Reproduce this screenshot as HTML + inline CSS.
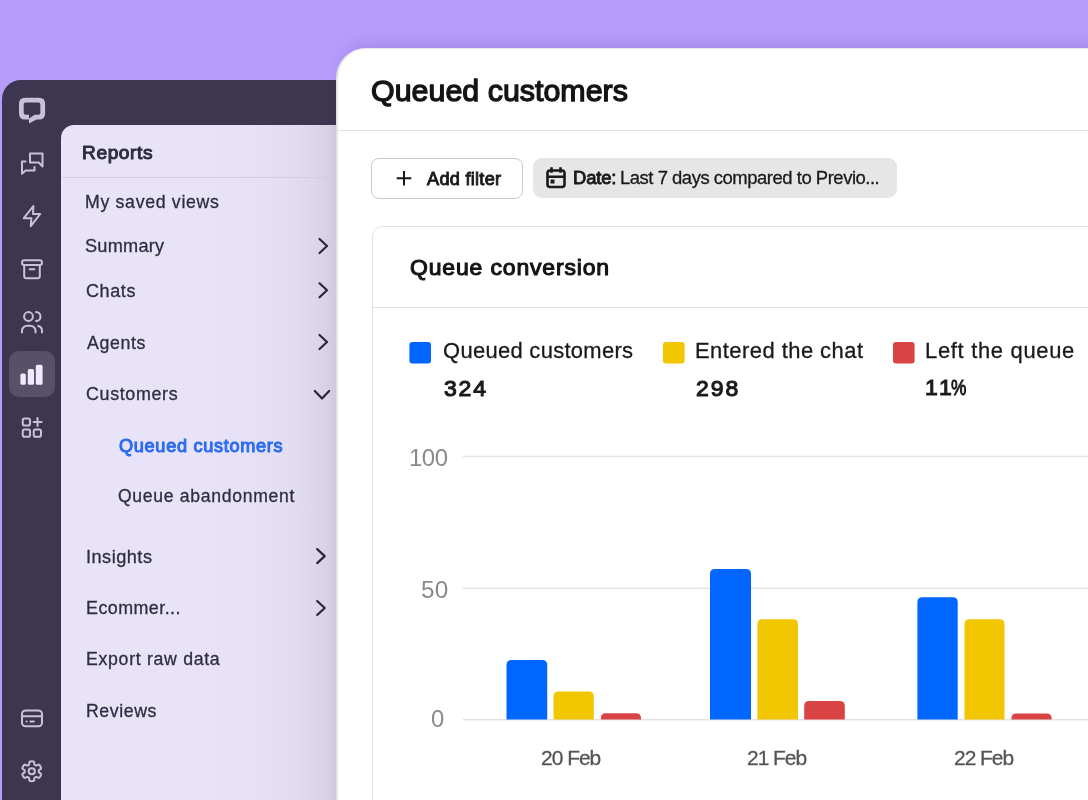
<!DOCTYPE html>
<html><head><meta charset="utf-8">
<style>
html,body{margin:0;padding:0;}
body{width:1088px;height:800px;overflow:hidden;position:relative;background:#B89CFC;font-family:"Liberation Sans",sans-serif;}
.abs{position:absolute;}
.t{position:absolute;line-height:0;white-space:nowrap;will-change:transform;}
#dark{position:absolute;left:2px;top:80px;width:500px;height:760px;background:#3D3650;border-top-left-radius:19px;}
#panel{position:absolute;left:61px;top:125px;width:275px;height:700px;border-top-left-radius:13px;
  background:linear-gradient(90deg,#E8E3F8 0px,#E8E3F8 140px,#E5E0F5 205px,#E1DCF1 235px,#DBD5EB 258px,#D4CEE3 275px);}
#psep{position:absolute;left:61px;top:176.5px;width:275px;height:1px;background:#D3CEE2;}
#main{position:absolute;left:336px;top:48px;width:800px;height:800px;background:#fff;border-top-left-radius:30px;
  border-top:1px solid #ECE8EE;border-left:2px solid #E4E4E6;box-sizing:border-box;box-shadow:0 -10px 18px -10px rgba(60,30,130,0.22);}
#hsep{position:absolute;left:337px;top:129.5px;width:800px;height:1.3px;background:#E3E3E3;}
#btn{position:absolute;left:371.3px;top:158px;width:149.3px;height:38.5px;border:1px solid #C9C9C9;border-radius:8px;background:#fff;}
#chip{position:absolute;left:533px;top:158px;width:364px;height:40px;border-radius:9px;background:#E6E6E6;}
#card{position:absolute;left:371.5px;top:225.5px;width:800px;height:800px;border:1.3px solid #E2E2E2;border-radius:10px;background:#fff;}
#csep{position:absolute;left:372px;top:307px;width:800px;height:1.3px;background:#E2E2E2;}
</style></head><body>
<div id="dark"></div>
<svg class="abs" width="60" height="800" viewBox="0 0 60 800" style="left:0;top:0"><path fill="#C8C1D8" fill-rule="evenodd" d="M25,97.85 H39.1 Q45.1,97.85 45.1,103.85 V113.5 Q45.1,119.5 39.1,119.5 H36.5 L29,123.5 V119.5 H25 Q19,119.5 19,113.5 V103.85 Q19,97.85 25,97.85 Z M25.7,102.6 H38.35 Q40.35,102.6 40.35,104.6 V112.75 Q40.35,114.75 38.35,114.75 H34.6 L29,118.6 V114.75 H25.7 Q23.7,114.75 23.7,112.75 V104.6 Q23.7,102.6 25.7,102.6 Z"/><path fill="none" stroke="#C8C1D8" stroke-width="2" stroke-linecap="round" stroke-linejoin="round" d="M30,162.5 V153.5 H42.5 V166.5 L38.8,162.5 Z"/><path fill="none" stroke="#C8C1D8" stroke-width="2" stroke-linecap="round" stroke-linejoin="round" d="M25.6,161.5 H22 V173.8 L25.6,170.6 H34.5 V167"/><path fill="none" stroke="#C8C1D8" stroke-width="2" stroke-linecap="round" stroke-linejoin="round" d="M33.4,206 L23.8,218.2 H31.4 L30.8,226.2 L40.2,214 H33 Z"/><rect x="22" y="260.2" width="20" height="4.8" rx="2.2" fill="none" stroke="#C8C1D8" stroke-width="2" stroke-linecap="round" stroke-linejoin="round"/><path fill="none" stroke="#C8C1D8" stroke-width="2" stroke-linecap="round" stroke-linejoin="round" d="M24.2,265 V276 Q24.2,278.2 26.4,278.2 H37.6 Q39.8,278.2 39.8,276 V265"/><path fill="none" stroke="#C8C1D8" stroke-width="2" stroke-linecap="round" stroke-linejoin="round" d="M29.6,269.2 H34.4"/><circle cx="28.5" cy="316.5" r="4.4" fill="none" stroke="#C8C1D8" stroke-width="2" stroke-linecap="round" stroke-linejoin="round"/><path fill="none" stroke="#C8C1D8" stroke-width="2" stroke-linecap="round" stroke-linejoin="round" d="M36,312 A4.5,4.5 0 0 1 36,321"/><path fill="none" stroke="#C8C1D8" stroke-width="2" stroke-linecap="round" stroke-linejoin="round" d="M22,332.5 V331 A5.2,5.2 0 0 1 27.2,325.8 H30.3 A5.2,5.2 0 0 1 35.5,331 V332.5"/><path fill="none" stroke="#C8C1D8" stroke-width="2" stroke-linecap="round" stroke-linejoin="round" d="M38.2,326 A5,5 0 0 1 42,331 V332.5"/><rect x="9" y="351" width="46" height="46" rx="10" fill="#575068"/><rect x="20.4" y="373.4" width="5.4" height="11.4" rx="1.6" fill="#EFEAFB"/><rect x="27.8" y="369" width="6.2" height="15.8" rx="1.6" fill="#EFEAFB"/><rect x="35.8" y="364.8" width="6.8" height="20" rx="1.6" fill="#EFEAFB"/><rect x="22.75" y="418.5" width="7.25" height="7" rx="1.8" fill="none" stroke="#C8C1D8" stroke-width="2" stroke-linecap="round" stroke-linejoin="round"/><rect x="22.75" y="429.5" width="7.25" height="7.25" rx="1.8" fill="none" stroke="#C8C1D8" stroke-width="2" stroke-linecap="round" stroke-linejoin="round"/><rect x="33.75" y="429.5" width="7.25" height="7.25" rx="1.8" fill="none" stroke="#C8C1D8" stroke-width="2" stroke-linecap="round" stroke-linejoin="round"/><path fill="none" stroke="#C8C1D8" stroke-width="2" stroke-linecap="round" stroke-linejoin="round" d="M33.6,422 H41.6 M37.5,418 V426"/><rect x="22" y="710.5" width="20" height="15.8" rx="3.5" fill="none" stroke="#C8C1D8" stroke-width="2" stroke-linecap="round" stroke-linejoin="round"/><path fill="none" stroke="#C8C1D8" stroke-width="2" stroke-linecap="round" stroke-linejoin="round" d="M22,716.2 H42"/><path fill="none" stroke="#C8C1D8" stroke-width="2" stroke-linecap="round" stroke-linejoin="round" stroke-width="1.6" d="M26.5,721.6 H26.6 M30.4,721.6 H33.8"/><polygon fill="none" stroke="#C8C1D8" stroke-width="2" stroke-linecap="round" stroke-linejoin="round" points="31.75,761.35 32.01,761.35 32.27,761.36 32.53,761.38 32.78,761.41 33.04,761.44 33.30,761.49 33.55,761.56 33.79,761.66 34.01,761.85 34.17,762.20 34.26,762.78 34.28,763.47 34.30,764.05 34.37,764.43 34.48,764.65 34.62,764.79 34.78,764.91 34.93,765.00 35.09,765.10 35.25,765.19 35.41,765.28 35.57,765.37 35.73,765.46 35.90,765.53 36.10,765.58 36.35,765.57 36.71,765.44 37.22,765.17 37.83,764.84 38.37,764.63 38.76,764.60 39.03,764.69 39.25,764.85 39.43,765.03 39.60,765.23 39.76,765.43 39.91,765.64 40.05,765.86 40.19,766.08 40.32,766.30 40.45,766.53 40.57,766.76 40.68,766.99 40.79,767.22 40.89,767.46 40.98,767.71 41.04,767.96 41.07,768.22 41.02,768.50 40.80,768.83 40.34,769.19 39.75,769.55 39.26,769.86 38.97,770.11 38.83,770.32 38.78,770.51 38.76,770.70 38.75,770.88 38.75,771.07 38.75,771.25 38.75,771.43 38.75,771.62 38.76,771.80 38.78,771.99 38.83,772.18 38.97,772.39 39.26,772.64 39.75,772.95 40.34,773.31 40.80,773.67 41.02,774.00 41.07,774.28 41.04,774.54 40.98,774.79 40.89,775.04 40.79,775.28 40.68,775.51 40.57,775.74 40.45,775.97 40.32,776.20 40.19,776.42 40.05,776.64 39.91,776.86 39.76,777.07 39.60,777.27 39.43,777.47 39.25,777.65 39.03,777.81 38.76,777.90 38.37,777.87 37.83,777.66 37.22,777.33 36.71,777.06 36.35,776.93 36.10,776.92 35.90,776.97 35.73,777.04 35.57,777.13 35.41,777.22 35.25,777.31 35.09,777.40 34.93,777.50 34.78,777.59 34.62,777.71 34.48,777.85 34.37,778.07 34.30,778.45 34.28,779.03 34.26,779.72 34.17,780.30 34.01,780.65 33.79,780.84 33.55,780.94 33.30,781.01 33.04,781.06 32.78,781.09 32.53,781.12 32.27,781.14 32.01,781.15 31.75,781.15 31.49,781.15 31.23,781.14 30.97,781.12 30.72,781.09 30.46,781.06 30.20,781.01 29.95,780.94 29.71,780.84 29.49,780.65 29.33,780.30 29.24,779.72 29.22,779.03 29.20,778.45 29.13,778.07 29.02,777.85 28.88,777.71 28.72,777.59 28.57,777.50 28.41,777.40 28.25,777.31 28.09,777.22 27.93,777.13 27.77,777.04 27.60,776.97 27.40,776.92 27.15,776.93 26.79,777.06 26.28,777.33 25.67,777.66 25.13,777.87 24.74,777.90 24.47,777.81 24.25,777.65 24.07,777.47 23.90,777.27 23.74,777.07 23.59,776.86 23.45,776.64 23.31,776.42 23.18,776.20 23.05,775.97 22.93,775.74 22.82,775.51 22.71,775.28 22.61,775.04 22.52,774.79 22.46,774.54 22.43,774.28 22.48,774.00 22.70,773.67 23.16,773.31 23.75,772.95 24.24,772.64 24.53,772.39 24.67,772.18 24.72,771.99 24.74,771.80 24.75,771.62 24.75,771.43 24.75,771.25 24.75,771.07 24.75,770.88 24.74,770.70 24.72,770.51 24.67,770.32 24.53,770.11 24.24,769.86 23.75,769.55 23.16,769.19 22.70,768.83 22.48,768.50 22.43,768.22 22.46,767.96 22.52,767.71 22.61,767.46 22.71,767.22 22.82,766.99 22.93,766.76 23.05,766.53 23.18,766.30 23.31,766.08 23.45,765.86 23.59,765.64 23.74,765.43 23.90,765.23 24.07,765.03 24.25,764.85 24.47,764.69 24.74,764.60 25.13,764.63 25.67,764.84 26.28,765.17 26.79,765.44 27.15,765.57 27.40,765.58 27.60,765.53 27.77,765.46 27.93,765.37 28.09,765.28 28.25,765.19 28.41,765.10 28.57,765.00 28.72,764.91 28.88,764.79 29.02,764.65 29.13,764.43 29.20,764.05 29.22,763.47 29.24,762.78 29.33,762.20 29.49,761.85 29.71,761.66 29.95,761.56 30.20,761.49 30.46,761.44 30.72,761.41 30.97,761.38 31.23,761.36 31.49,761.35"/><circle cx="31.75" cy="771.25" r="3.1" fill="none" stroke="#C8C1D8" stroke-width="2" stroke-linecap="round" stroke-linejoin="round"/></svg>
<div id="panel"></div>
<div id="psep"></div>
<div class="t" id="reports" style="left:82.00px;top:152.86px;font-size:19.11px;font-weight:400;color:#312D40;letter-spacing:0.600px;-webkit-text-stroke:1.05px #312D40;">Reports</div><div class="t" id="saved" style="left:85.20px;top:202.44px;font-size:17.73px;font-weight:400;color:#312D40;letter-spacing:0.677px;-webkit-text-stroke:0.3px #312D40;">My saved views</div><div class="t" id="summary" style="left:85.20px;top:246.08px;font-size:18.17px;font-weight:400;color:#312D40;letter-spacing:0.233px;-webkit-text-stroke:0.3px #312D40;">Summary</div><div class="t" id="chats" style="left:85.80px;top:290.83px;font-size:18.02px;font-weight:400;color:#312D40;letter-spacing:0.600px;-webkit-text-stroke:0.3px #312D40;">Chats</div><div class="t" id="agents" style="left:86.80px;top:343.04px;font-size:17.73px;font-weight:400;color:#312D40;letter-spacing:0.640px;-webkit-text-stroke:0.3px #312D40;">Agents</div><div class="t" id="customers" style="left:85.80px;top:394.49px;font-size:17.88px;font-weight:400;color:#312D40;letter-spacing:0.662px;-webkit-text-stroke:0.3px #312D40;">Customers</div><div class="t" id="qcblue" style="left:119.40px;top:445.98px;font-size:18.17px;font-weight:400;color:#2C6CF0;letter-spacing:0.680px;-webkit-text-stroke:1.05px #2C6CF0;">Queued customers</div><div class="t" id="qaband" style="left:118.40px;top:495.69px;font-size:17.59px;font-weight:400;color:#312D40;letter-spacing:0.700px;-webkit-text-stroke:0.3px #312D40;">Queue abandonment</div><div class="t" id="insights" style="left:85.80px;top:557.08px;font-size:18.17px;font-weight:400;color:#312D40;letter-spacing:0.486px;-webkit-text-stroke:0.3px #312D40;">Insights</div><div class="t" id="ecom" style="left:85.80px;top:608.49px;font-size:17.88px;font-weight:400;color:#312D40;letter-spacing:0.467px;-webkit-text-stroke:0.3px #312D40;">Ecommer...</div><div class="t" id="export" style="left:85.80px;top:659.44px;font-size:17.73px;font-weight:400;color:#312D40;letter-spacing:0.686px;-webkit-text-stroke:0.3px #312D40;">Export raw data</div><div class="t" id="reviews" style="left:85.80px;top:711.24px;font-size:17.73px;font-weight:400;color:#312D40;letter-spacing:0.567px;-webkit-text-stroke:0.3px #312D40;">Reviews</div>
<svg class="abs" width="1088" height="800" style="left:0;top:0"><path fill="none" stroke="#2A2638" stroke-width="2.2" stroke-linecap="round" stroke-linejoin="round" d="M319.5,239 L327.0,246 L319.5,253"/><path fill="none" stroke="#2A2638" stroke-width="2.2" stroke-linecap="round" stroke-linejoin="round" d="M319.5,283.3 L327.0,290.3 L319.5,297.3"/><path fill="none" stroke="#2A2638" stroke-width="2.2" stroke-linecap="round" stroke-linejoin="round" d="M319.5,335 L327.0,342 L319.5,349"/><path fill="none" stroke="#2A2638" stroke-width="2.2" stroke-linecap="round" stroke-linejoin="round" d="M317.2,549.1 L324.7,556.1 L317.2,563.1"/><path fill="none" stroke="#2A2638" stroke-width="2.2" stroke-linecap="round" stroke-linejoin="round" d="M317.2,601 L324.7,608 L317.2,615"/><path fill="none" stroke="#2A2638" stroke-width="2.2" stroke-linecap="round" stroke-linejoin="round" d="M314.8,391 L322,398.5 L329.2,391"/></svg>
<div id="main"></div>
<div id="hsep"></div>
<div id="btn"></div>
<div id="chip"></div>
<div id="card"></div>
<div id="csep"></div>
<svg class="abs" width="1088" height="800" style="left:0;top:0"><rect x="463" y="455.75" width="700" height="1.5" fill="#E2E2E2"/><rect x="463" y="587.55" width="700" height="1.5" fill="#E2E2E2"/><rect x="463" y="718.95" width="700" height="1.5" fill="#E2E2E2"/><path fill="#0066FF" d="M506.5,719.5 V665 Q506.5,660 511.5,660 H542.2 Q547.2,660 547.2,665 V719.5 Z"/><path fill="#F2C600" d="M553.5,719.5 V696.6 Q553.5,691.6 558.5,691.6 H588.8 Q593.8,691.6 593.8,696.6 V719.5 Z"/><path fill="#DA4343" d="M600.9,719.5 V718.2 Q600.9,713.2 605.9,713.2 H636 Q641,713.2 641,718.2 V719.5 Z"/><path fill="#0066FF" d="M710,719.5 V574 Q710,569 715,569 H746 Q751,569 751,574 V719.5 Z"/><path fill="#F2C600" d="M757.4,719.5 V624.3 Q757.4,619.3 762.4,619.3 H793 Q798,619.3 798,624.3 V719.5 Z"/><path fill="#DA4343" d="M804.2,719.5 V706 Q804.2,701 809.2,701 H839.8 Q844.8,701 844.8,706 V719.5 Z"/><path fill="#0066FF" d="M917.4,719.5 V602.3 Q917.4,597.3 922.4,597.3 H952.7 Q957.7,597.3 957.7,602.3 V719.5 Z"/><path fill="#F2C600" d="M964.5,719.5 V624.2 Q964.5,619.2 969.5,619.2 H999.5 Q1004.5,619.2 1004.5,624.2 V719.5 Z"/><path fill="#DA4343" d="M1011.4,719.5 V718.4 Q1011.4,713.4 1016.4,713.4 H1046.6 Q1051.6,713.4 1051.6,718.4 V719.5 Z"/><rect x="409.4" y="341.9" width="21.6" height="21.7" rx="3" fill="#0066FF"/><rect x="663" y="341.9" width="21.6" height="21.7" rx="3" fill="#F2C600"/><rect x="893" y="341.9" width="21.6" height="21.7" rx="3" fill="#DA4343"/><path d="M404,171 V185.6 M396.7,178.3 H411.3" stroke="#1A1A1A" stroke-width="2" fill="none"/><rect x="547.5" y="170.5" width="17" height="16.5" rx="2.5" fill="none" stroke="#1A1A1A" stroke-width="2.6"/><path d="M547.5,176.8 H564.5 M551.5,167.3 V172.8 M560.5,167.3 V172.8" stroke="#1A1A1A" stroke-width="2.6" fill="none"/><rect x="550.5" y="179.5" width="4" height="4" fill="#1A1A1A"/></svg>
<div class="t" id="title" style="left:371.40px;top:89.65px;font-size:30.38px;font-weight:400;color:#141414;letter-spacing:0.020px;-webkit-text-stroke:1.3px #141414;">Queued customers</div><div class="t" id="addf" style="left:427.20px;top:179.14px;font-size:18.17px;font-weight:400;color:#1A1A1A;letter-spacing:0.267px;-webkit-text-stroke:0.9px #1A1A1A;">Add filter</div><div class="t" id="date" style="left:573.40px;top:177.94px;font-size:18.46px;font-weight:400;color:#1A1A1A;letter-spacing:-0.175px;-webkit-text-stroke:0.9px #1A1A1A;">Date:</div><div class="t" id="last" style="left:620.00px;top:178.18px;font-size:18.46px;font-weight:400;color:#1A1A1A;letter-spacing:-0.466px;-webkit-text-stroke:0.3px #1A1A1A;">Last 7 days compared to Previo...</div><div class="t" id="qconv" style="left:409.60px;top:267.10px;font-size:22.97px;font-weight:400;color:#141414;letter-spacing:0.847px;-webkit-text-stroke:1.1px #141414;">Queue conversion</div><div class="t" id="leg1" style="left:442.60px;top:350.88px;font-size:21.95px;font-weight:400;color:#1A1A1A;letter-spacing:0.313px;-webkit-text-stroke:0.3px #1A1A1A;">Queued customers</div><div class="t" id="leg2" style="left:695.00px;top:350.88px;font-size:21.95px;font-weight:400;color:#1A1A1A;letter-spacing:0.467px;-webkit-text-stroke:0.3px #1A1A1A;">Entered the chat</div><div class="t" id="leg3" style="left:925.00px;top:350.88px;font-size:21.95px;font-weight:400;color:#1A1A1A;letter-spacing:0.692px;-webkit-text-stroke:0.3px #1A1A1A;">Left the queue</div><div class="t" id="v1" style="left:443.60px;top:387.70px;font-size:22.97px;font-weight:400;color:#1A1A1A;letter-spacing:1.800px;-webkit-text-stroke:1.1px #1A1A1A;">324</div><div class="t" id="v2" style="left:696.00px;top:387.70px;font-size:22.97px;font-weight:400;color:#1A1A1A;letter-spacing:2.000px;-webkit-text-stroke:1.1px #1A1A1A;">298</div><div class="t" id="y100" style="left:409.00px;top:457.89px;font-size:23.98px;font-weight:400;color:#8A8A8A;letter-spacing:-0.500px;">100</div><div class="t" id="y50" style="left:420.60px;top:589.69px;font-size:24.27px;font-weight:400;color:#8A8A8A;letter-spacing:0.200px;">50</div><div class="t" id="y0" style="left:431.00px;top:719.24px;font-size:23.84px;font-weight:400;color:#8A8A8A;letter-spacing:0.000px;">0</div><div class="t" id="x20" style="left:540.60px;top:757.73px;font-size:20.93px;font-weight:400;color:#555555;letter-spacing:-0.980px;-webkit-text-stroke:0.3px #555555;">20 Feb</div><div class="t" id="x21" style="left:747.00px;top:757.73px;font-size:20.93px;font-weight:400;color:#555555;letter-spacing:-1.000px;-webkit-text-stroke:0.3px #555555;">21 Feb</div><div class="t" id="x22" style="left:954.00px;top:757.73px;font-size:20.93px;font-weight:400;color:#555555;letter-spacing:-1.000px;-webkit-text-stroke:0.3px #555555;">22 Feb</div><div class="t" style="transform-origin:0 0;transform:scaleX(1);left:925.2px;top:387.32px;font-size:22.97px;color:#1A1A1A;-webkit-text-stroke:1.1px #1A1A1A;">1</div><div class="t" style="transform-origin:0 0;transform:scaleX(1);left:939.0px;top:387.32px;font-size:22.97px;color:#1A1A1A;-webkit-text-stroke:1.1px #1A1A1A;">1</div><div class="t" style="transform-origin:0 0;transform:scaleX(0.75);left:951.0px;top:387.32px;font-size:22.97px;color:#1A1A1A;-webkit-text-stroke:1.1px #1A1A1A;">%</div>
</body></html>
